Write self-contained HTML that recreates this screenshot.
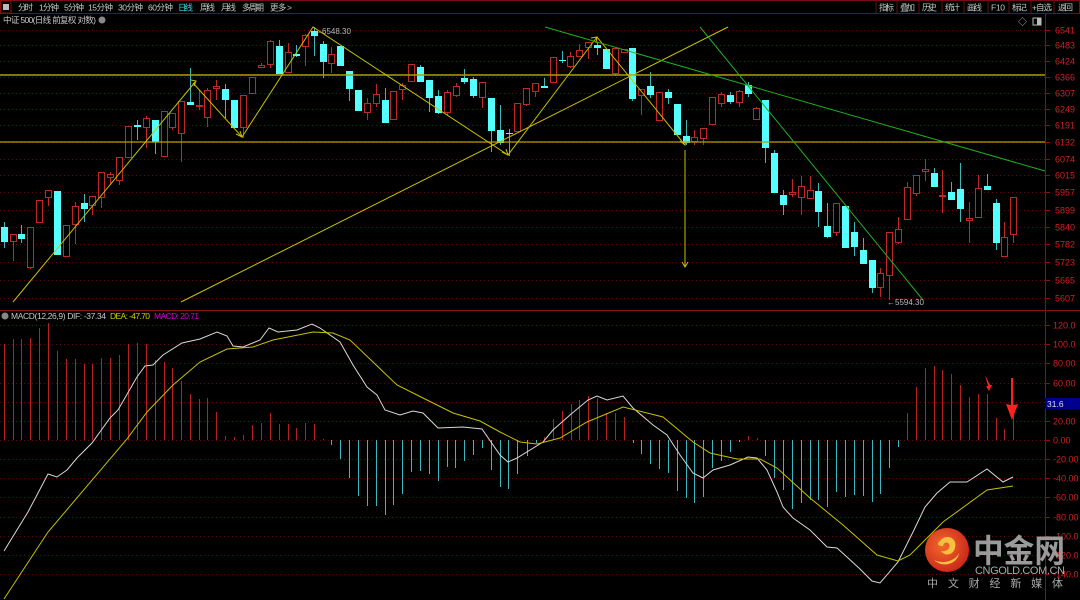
<!DOCTYPE html>
<html><head><meta charset="utf-8"><style>
html,body{margin:0;padding:0;background:#000;width:1080px;height:600px;overflow:hidden;font-family:"Liberation Sans","Noto Sans CJK SC",sans-serif}
svg{position:absolute;left:0;top:0}
</style></head><body>
<svg id="s" width="1080" height="600" xmlns="http://www.w3.org/2000/svg" font-family="Liberation Sans, Noto Sans CJK SC, sans-serif">
<rect width="1080" height="600" fill="#000"/>
<rect x="0.5" y="0.5" width="1079" height="13" fill="#000" stroke="#7a0d10"/>
<rect x="1" y="1" width="10" height="12" fill="none" stroke="#8a1010"/>
<rect x="3" y="4" width="6" height="6" fill="#bbb"/>
<g font-size="8.5" fill="#c8c8c8">
<text x="18" y="10.5" textLength="15">分时</text><text x="39" y="10.5" textLength="20">1分钟</text><text x="64" y="10.5" textLength="20">5分钟</text><text x="88" y="10.5" textLength="25">15分钟</text><text x="118" y="10.5" textLength="25">30分钟</text><text x="148" y="10.5" textLength="25">60分钟</text>
<text x="178" y="10.5" textLength="15" fill="#3ad8e8">日线</text><text x="200" y="10.5" textLength="15">周线</text><text x="221" y="10.5" textLength="15">月线</text><text x="242" y="10.5" textLength="22">多周期</text><text x="270" y="10.5" textLength="22">更多 &gt;</text>
<text x="879" y="10.5" textLength="15">指标</text><text x="900" y="10.5" textLength="15">叠加</text><text x="922" y="10.5" textLength="15">历史</text><text x="945" y="10.5" textLength="15">统计</text><text x="967" y="10.5" textLength="15">画线</text><text x="991" y="10.5" textLength="14">F10</text><text x="1012" y="10.5" textLength="15">标记</text><text x="1032" y="10.5" textLength="20">+自选</text><text x="1058" y="10.5" textLength="15">返回</text>
</g>
<g stroke="#6a1010"><line x1="876" y1="1" x2="876" y2="13"/><line x1="897" y1="1" x2="897" y2="13"/><line x1="919" y1="1" x2="919" y2="13"/><line x1="942" y1="1" x2="942" y2="13"/><line x1="964" y1="1" x2="964" y2="13"/><line x1="988" y1="1" x2="988" y2="13"/><line x1="1009" y1="1" x2="1009" y2="13"/><line x1="1031" y1="1" x2="1031" y2="13"/><line x1="1054" y1="1" x2="1054" y2="13"/></g>
<text x="3" y="23" font-size="8.5" fill="#c8c8c8" textLength="93">中证 500(日线 前复权 对数)</text>
<circle cx="102" cy="20" r="3.5" fill="#888"/>
<text x="1018" y="25" font-size="9" fill="#bbb">◇</text>
<rect x="1033" y="18" width="8" height="7" fill="none" stroke="#bbb"/><rect x="1037" y="18" width="4" height="7" fill="#bbb"/>
<line x1="1045.5" y1="14" x2="1045.5" y2="600" stroke="#8a1010"/>
<line x1="0" y1="310.5" x2="1080" y2="310.5" stroke="#8a1010"/>
<g id="grid"></g>
<g id="candles"></g>
<g id="macd"></g>
<line x1="0" y1="75" x2="1045" y2="75" stroke="#b0a000" stroke-width="1.5"/>
<line x1="0" y1="142" x2="1045" y2="142" stroke="#b0a000" stroke-width="1.2"/>
<g stroke="#c8c000" stroke-width="1" fill="none">
<polyline points="13,302 196,81"/>
<polyline points="193,83 242,137 313,27 508,155 597,37 685,145"/>
<line x1="181" y1="302" x2="728" y2="27"/>
<line x1="685" y1="150" x2="685" y2="267"/>
<polyline points="682,262 685,267 688,262"/>
<polyline points="191,80 196,81 194,86"/>
<polyline points="236,134 242,137 240,131"/>
<polyline points="502,152 508,155 506,149"/>
<polyline points="591,38 597,37 596,43"/>
<polyline points="680,141 685,145 686,139"/>
</g>
<g stroke="#20b020" stroke-width="1" fill="none">
<line x1="545" y1="27" x2="1045" y2="171"/>
<line x1="700" y1="27" x2="923" y2="300"/>
</g>
<text x="314" y="34" font-size="8" fill="#bbb">←6548.30</text>
<text x="887" y="305" font-size="8" fill="#bbb">←5594.30</text>
<circle cx="5" cy="316" r="3.5" fill="#888"/>
<text x="11" y="319" font-size="8.5" fill="#c8c8c8" textLength="95">MACD(12,26,9) DIF: -37.34</text>
<text x="110" y="319" font-size="8.5" fill="#d0d000" textLength="40">DEA: -47.70</text>
<text x="154" y="319" font-size="8.5" fill="#d000d0" textLength="45">MACD: 20.71</text>
<path d="M985,375 L988,386 L986,386 L989,391 L992,385 L990,385 Z" fill="#ff2020"/>
<path d="M1011,378 L1013,378 L1013.5,405 L1018,404 L1012,420 L1006,404 L1011,405 Z" fill="#ff2020"/>
<rect x="1045" y="398" width="35" height="11" fill="#00008e"/>
<text x="1047" y="407" font-size="8.5" fill="#ddd">31.6</text>
<defs><radialGradient id="lg" cx="0.4" cy="0.4" r="0.7"><stop offset="0" stop-color="#f06a2a"/><stop offset="1" stop-color="#c8201a"/></radialGradient></defs>
<circle cx="947" cy="550" r="22" fill="url(#lg)"/>
<path d="M940,541 C946,533 958,538 955,548 C953,556 944,556 941,551 C947,552 951,548 949,544 C947,541 943,543 943,546 C937,546 937,543 940,541 Z M934,560 C944,565 956,560 959,553 C958,563 944,569 934,560 Z" fill="#f8c040"/>
<text x="973" y="562" font-size="32" font-weight="bold" fill="#9a9a9a" textLength="92" lengthAdjust="spacingAndGlyphs">中金网</text>
<text x="975" y="574" font-size="11" fill="#aaa" textLength="90">CNGOLD.COM.CN</text>
<text x="927" y="587" font-size="11" fill="#aaa" textLength="136">中文财经新媒体</text>
</svg>
<script>
var NS="http://www.w3.org/2000/svg";
function el(p,t,a){var e=document.createElementNS(NS,t);for(var k in a)e.setAttribute(k,a[k]);p.appendChild(e);return e;}
var g=document.getElementById('grid');
var pl=[[6541,30],[6483,45],[6424,61],[6366,77],[6307,93],[6249,109],[6191,125],[6132,142],[6074,159],[6015,175],[5957,192],[5899,210],[5840,227],[5782,244],[5723,262],[5665,280],[5607,298]];
pl.forEach(function(p){el(g,'line',{x1:0,y1:p[1]+.5,x2:1045,y2:p[1]+.5,stroke:'#5a0a0a','stroke-dasharray':'1,3'});
el(g,'line',{x1:1045,y1:p[1]+.5,x2:1050,y2:p[1]+.5,stroke:'#8a1010'});
var t=el(g,'text',{x:1055,y:p[1]+3.5,'font-size':'9',fill:'#d02020'});t.textContent=p[0];});
var ml=[['120.0',325],['100.0',344],['80.00',363],['60.00',383],['40.00',402],['20.00',421],['0.00',440],['-20.00',459],['-40.00',478],['-60.00',497],['-80.00',517],['-100.0',536],['-120.0',555],['-140.0',574]];
ml.forEach(function(p){el(g,'line',{x1:0,y1:p[1]+.5,x2:1045,y2:p[1]+.5,stroke:'#5a0a0a','stroke-dasharray':'1,3'});
el(g,'line',{x1:1045,y1:p[1]+.5,x2:1050,y2:p[1]+.5,stroke:'#8a1010'});
var t=el(g,'text',{x:1053,y:p[1]+3.5,'font-size':'9',fill:'#d02020'});t.textContent=p[0];});
var C=[[4,'c',227,242,222,248],[13,'r',234,241,234,261],[21,'c',234,239,225,243],[30,'r',227,267,227,269],[39,'r',200,222,200,222],[48,'r',190,197,190,206],[57,'c',191,255,191,255],[66,'r',225,256,225,256],[75,'r',206,224,202,244],[84,'c',203,209,194,222],[92,'r',196,205,196,215],[101,'r',172,197,172,208],[110,'r',174,177,172,185],[119,'r',157,180,157,185],[128,'r',126,157,126,157],[137,'c',125,127,120,140],[146,'r',118,127,116,148],[155,'c',120,142,120,154],[164,'r',111,156,111,156],[172,'r',113,127,113,130],[181,'r',101,133,101,162],[190,'c',102,105,68,105],[199,'r',105,106,90,110],[207,'r',90,117,88,127],[216,'r',86,88,80,100],[225,'c',89,100,84,118],[234,'c',100,128,100,128],[243,'r',95,127,95,138],[252,'r',77,93,77,93],[261,'r',65,67,63,68],[270,'r',41,64,40,68],[279,'c',46,74,40,74],[288,'r',52,72,43,72],[296,'c',54,56,45,57],[305,'r',35,46,34,66],[314,'c',31,36,27,56],[323,'c',44,62,41,78],[331,'r',54,63,47,73],[340,'c',46,66,46,66],[349,'c',71,89,71,101],
[358,'c',90,111,90,111],[367,'r',103,112,98,120],[376,'r',94,103,84,107],[385,'c',100,123,88,123],[393,'r',91,119,91,120],[402,'r',85,89,83,100],[411,'r',64,81,64,81],[420,'c',67,82,65,82],[429,'c',80,98,80,112],[438,'c',96,113,90,114],[447,'r',92,112,90,115],[456,'r',86,95,83,97],[464,'c',78,82,69,84],[473,'c',79,96,77,98],[482,'r',82,97,82,108],[491,'c',98,131,98,152],[500,'c',130,143,105,145],[509,'c',133,134,129,156],[517,'r',103,131,103,132],[526,'r',88,104,88,106],[535,'r',83,91,83,97],[544,'c',86,88,78,88],[553,'r',57,82,57,82],[562,'c',60,61,51,63],[570,'r',56,66,52,68],[579,'r',50,56,44,57],[588,'r',42,47,42,59],[597,'c',45,48,42,55],[606,'c',49,69,49,69],[615,'r',48,73,48,76],[624,'r',49,52,49,52],[632,'c',48,99,48,101],[641,'r',89,95,89,115],[650,'c',86,95,72,98],[659,'r',92,120,92,121],[668,'c',92,98,89,104],[677,'c',104,135,104,135],[686,'c',136,143,120,145],
[694,'r',137,141,130,145],[703,'r',128,138,128,145],[712,'r',97,124,97,124],[721,'r',94,103,92,107],[730,'c',95,102,92,104],[739,'r',91,102,90,107],[748,'c',85,94,82,97],[756,'r',108,119,107,120],[765,'c',100,148,100,163],[774,'c',153,193,150,193],[783,'c',195,205,190,215],[792,'r',192,194,179,197],[801,'r',186,197,176,215],[810,'r',190,198,176,198],[818,'c',191,212,183,227],[827,'c',226,237,203,238],[836,'r',203,232,203,236],[845,'c',206,248,206,248],[854,'c',232,247,222,256],[863,'c',250,264,238,264],[872,'c',260,288,260,293],[880,'r',273,287,268,297],[889,'r',232,275,232,300],[898,'r',229,242,217,244],[907,'r',187,219,182,219],[916,'r',175,193,175,196],[925,'r',169,171,159,181],[934,'c',173,187,168,187],[942,'r',195,196,170,213],[951,'c',192,200,182,200],[960,'c',189,209,163,222],[969,'r',218,220,202,243],[978,'r',188,217,175,217],[987,'c',186,190,174,190],[996,'c',203,243,199,250],[1004,'r',237,256,222,256],[1013,'r',197,234,197,243]];
var cg=document.getElementById('candles');
C.forEach(function(c){var col=c[1]=='r'?'#c02828':'#54ffff';var wc=c[1]=='r'?'#c02828':'#3ab8b8';
el(cg,'line',{x1:c[0]+.5,y1:c[4],x2:c[0]+.5,y2:c[5],stroke:wc});
var h=Math.max(c[3]-c[2],1);
if(c[1]=='r')el(cg,'rect',{x:c[0]-2.5,y:c[2]+.5,width:6,height:h,fill:'#000',stroke:col});
else el(cg,'rect',{x:c[0]-3,y:c[2],width:7,height:h,fill:col});});
var mg=document.getElementById('macd');
var B=[[4,344],[13,339],[21,339],[30,338],[39,328],[48,323],[57,351],[66,359],[75,359],[84,364],[92,364],[101,358],[110,358],[119,355],[128,344],[137,343],[146,344],[155,360],[164,362],[172,368],[181,381],[190,394],[199,399],[207,398],[216,412],[225,436],[234,437],[243,435],[252,425],[261,423],[270,413],[279,424],[288,424],[296,428],[305,423],[314,424],[323,439],[331,445],[340,459],[349,478],[358,496],[367,506],[376,506],[385,515],[393,505],[402,494],[411,472],[420,471],[429,474],[438,481],[447,467],[455,468],[464,461],[473,455],[482,448],[491,470],[500,487],[508,489],[517,474],[527,456],[536,443],[544,437],[553,419],[562,411],[571,404],[579,400],[588,396],[597,398],[606,413],[615,413],[624,417],[633,443],[641,454],[650,464],[659,469],[668,473],[677,491],[686,498],[694,503],[703,497],[712,468],[721,461],[730,452],[739,442],[748,436],[757,438],[765,456],[774,478],[783,490],[792,509],[801,503],[810,500],[818,500],[827,507],[836,492],[845,497],[854,495],[863,496],[872,502],[880,494],[889,468],[898,447],[907,413],[916,387],[925,368],[934,366],[942,370],[951,374],[960,385],[969,397],[978,394],[987,394],[996,418],[1004,429],[1013,415]];
B.forEach(function(b){var up=b[1]<440;el(mg,'line',{x1:b[0]+.5,y1:440,x2:b[0]+.5,y2:b[1],stroke:up?'#b82020':'#3ab8c0'});});
var dif="4,551 28,512 48,474 57,477 67,470 77,458 92,443 110,418 118,410 137,377 145,366 153,365 163,355 182,343 200,339 217,332 227,336 233,346 243,347 260,340 269,328 278,332 297,330 312,324 320,328 340,342 353,365 367,387 377,395 385,410 400,415 413,411 423,413 438,428 463,427 482,429 500,455 508,462 517,458 543,442 553,430 570,415 588,400 597,396 607,400 623,396 633,408 653,425 667,435 680,455 693,473 703,478 713,470 730,465 748,457 757,458 767,470 777,492 783,507 793,518 810,530 827,547 837,548 847,557 860,569 872,581 880,583 898,562 913,532 925,507 937,493 950,482 967,482 987,469 1003,482 1013,477";
var dea="4,599 48,532 127,439 147,412 173,385 200,362 227,349 253,347 273,340 313,332 333,333 350,340 373,362 397,385 423,398 453,413 480,421 500,432 520,442 537,444 560,438 587,422 623,407 663,417 693,442 710,453 737,459 760,459 777,468 810,498 843,525 877,555 898,561 910,555 943,522 987,490 1013,486";
el(mg,'polyline',{points:dif,fill:'none',stroke:'#d8d8d8','stroke-width':1});
el(mg,'polyline',{points:dea,fill:'none',stroke:'#c8c000','stroke-width':1});
</script>
</body></html>
